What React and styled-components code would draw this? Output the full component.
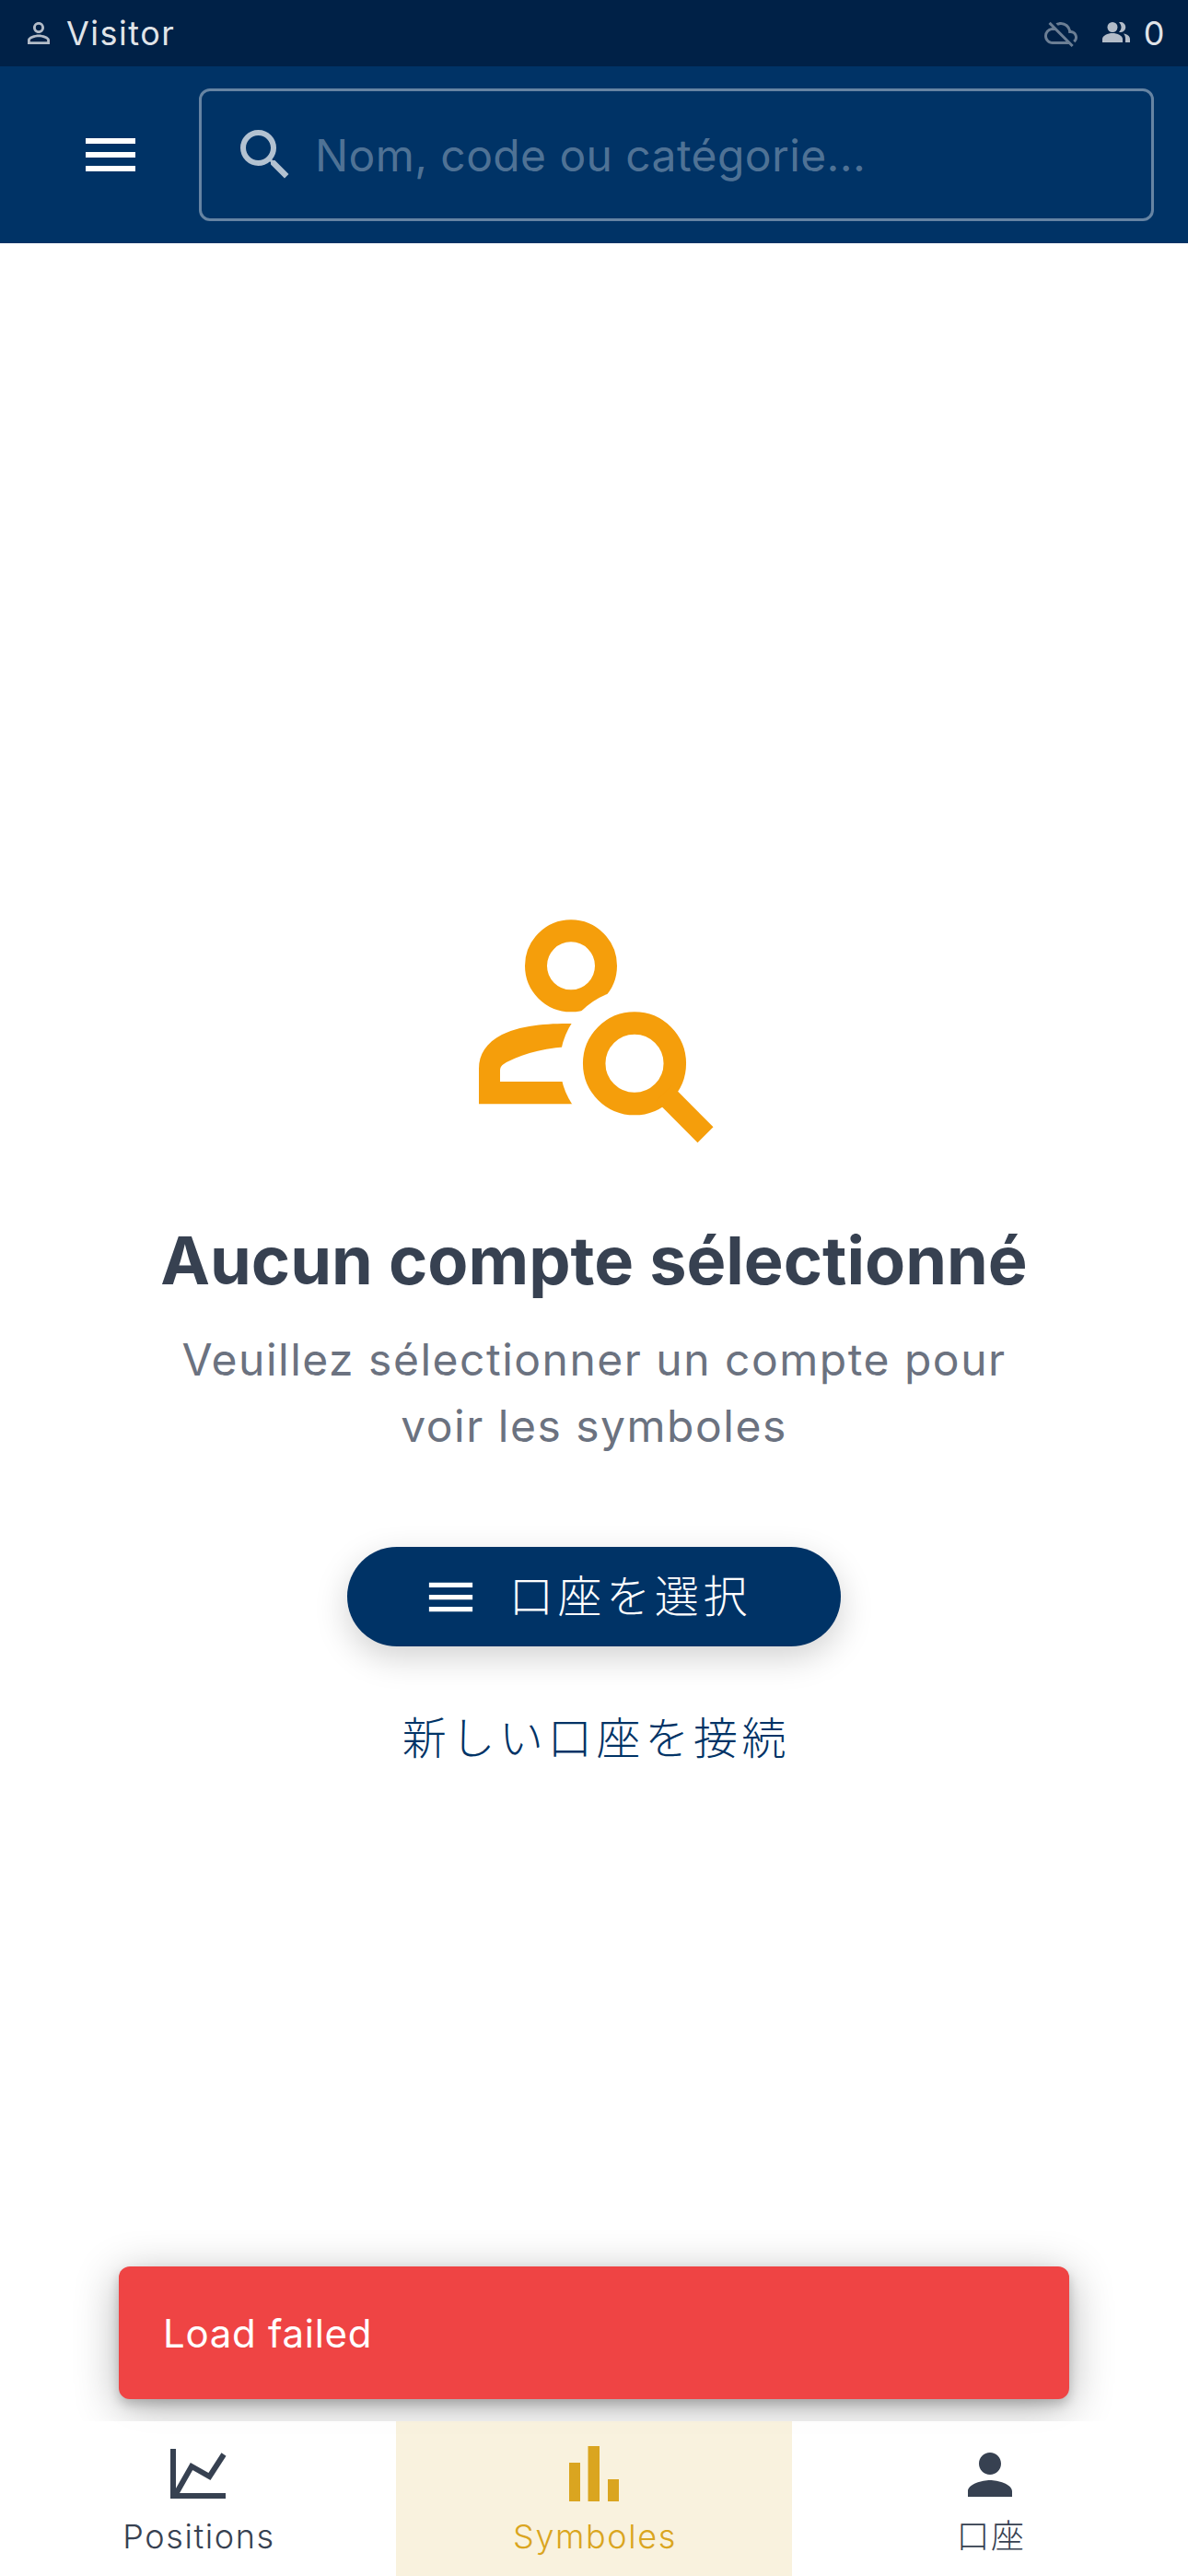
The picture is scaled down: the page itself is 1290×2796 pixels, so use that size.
import React from "react";
import styled, { createGlobalStyle } from "styled-components";
import {
  MdMenu,
  MdSearch,
  MdPerson,
  MdPersonOutline,
  MdOutlineCloudOff,
} from "react-icons/md";

const Global = createGlobalStyle`
  html, body { margin: 0; padding: 0; background: #fff; }
  * { box-sizing: border-box; }
  body { font-family: Inter, "Noto Sans CJK JP", sans-serif; }
`;

const Screen = styled.div`
  width: 1290px;
  height: 2796px;
  display: flex;
  flex-direction: column;
  overflow: hidden;
  background: #fff;
`;

const StatusBar = styled.div`
  height: 72px;
  flex: none;
  display: flex;
  align-items: center;
  justify-content: space-between;
  padding: 0 24px;
  background: #002147;
  color: rgba(255, 255, 255, 0.9);
  font-size: 36px;
`;

const StatusGroup = styled.div`
  display: flex;
  align-items: center;
  gap: ${(p) => p.$gap}px;
  color: rgba(255, 255, 255, 0.7);
`;

const StatusText = styled.span`
  color: rgba(255, 255, 255, 0.9);
  letter-spacing: 1.5px;
  margin-left: ${(p) => p.$ml || 0}px;
`;

const CloudOff = styled(MdOutlineCloudOff)`
  opacity: 0.6;
`;

const Header = styled.header`
  height: 192px;
  flex: none;
  display: flex;
  align-items: center;
  padding: 0 37px 0 84px;
  gap: 60px;
  background: #003366;
`;

const MenuButton = styled.button`
  width: 72px;
  height: 72px;
  flex: none;
  padding: 0;
  border: 0;
  background: none;
  color: #fff;
  display: flex;
`;

const SearchBox = styled.div`
  flex: 1;
  height: 144px;
  display: flex;
  align-items: center;
  gap: 18px;
  padding: 0 33px;
  border: 3px solid rgba(255, 255, 255, 0.4);
  border-radius: 12px;
  color: rgba(255, 255, 255, 0.7);
`;

const Placeholder = styled.span`
  font-size: 48px;
  color: rgba(255, 255, 255, 0.33);
  letter-spacing: 0.4px;
`;

const Main = styled.main`
  flex: 1;
  position: relative;
  display: flex;
  flex-direction: column;
  align-items: center;
  padding-top: 684px;
`;

const HeroSvg = styled.svg`
  display: block;
  width: 300px;
  height: 300px;
  color: #f59e0b;
`;

const Title = styled.h1`
  margin: 72px 0 0;
  font-size: 72px;
  line-height: 96px;
  font-weight: 700;
  color: #374151;
`;

const Subtitle = styled.p`
  margin: 24px 0 0;
  width: 1000px;
  text-align: center;
  font-size: 48px;
  line-height: 72px;
  letter-spacing: 1.5px;
  color: #6b7280;
`;

const PrimaryButton = styled.button`
  margin-top: 95px;
  width: 536px;
  height: 108px;
  display: flex;
  align-items: center;
  justify-content: center;
  gap: 32px;
  padding: 0 16px 0 0;
  border: 0;
  border-radius: 54px;
  background: #003366;
  color: #fff;
  font: 300 48px/1 Inter, "Noto Sans CJK JP", sans-serif;
  letter-spacing: 4.7px;
  box-shadow: 0 12px 36px rgba(0, 0, 0, 0.18);
`;

const LinkText = styled.a`
  margin-top: 64px;
  padding-left: 5px;
  font-size: 48px;
  font-weight: 300;
  line-height: 72px;
  letter-spacing: 4.7px;
  color: #003366;
`;

const Toast = styled.div`
  position: absolute;
  left: 129px;
  right: 129px;
  bottom: 24px;
  height: 144px;
  display: flex;
  align-items: center;
  padding: 0 48px;
  border-radius: 12px;
  background: #ef4444;
  color: #fff;
  font-size: 42px;
  letter-spacing: 0.7px;
  box-shadow: 0 10px 48px rgba(0, 0, 0, 0.3), 0 6px 12px rgba(0, 0, 0, 0.18);
`;

const Nav = styled.nav`
  height: 168px;
  flex: none;
  position: relative;
  z-index: 1;
  display: grid;
  grid-template-columns: repeat(3, 1fr);
  background: rgba(255, 255, 255, 0.9);
`;

const Tab = styled.div`
  display: flex;
  flex-direction: column;
  align-items: center;
  padding-top: 22px;
  color: ${(p) => (p.$active ? "#daa520" : "#374151")};
  background: ${(p) => (p.$active ? "rgba(218, 165, 32, 0.15)" : "transparent")};
`;

const TabIcon = styled.div`
  height: 72px;
  display: flex;
  align-items: center;
  justify-content: center;
`;

const TabLabel = styled.span`
  margin-top: 9px;
  padding-left: 2px;
  font-size: 36px;
  line-height: 44px;
  letter-spacing: 1.6px;
  font-weight: 300;
`;

const HeroIcon = () => (
  <HeroSvg viewBox="0 0 300 300" fill="none">
    <defs>
      <mask id="lensCut" maskUnits="userSpaceOnUse" x="0" y="0" width="300" height="300">
        <rect width="300" height="300" fill="#fff" />
        <circle cx="194" cy="206.3" r="81" fill="#000" />
      </mask>
    </defs>
    <g mask="url(#lensCut)">
      <circle cx="125" cy="100.3" r="38" stroke="currentColor" strokeWidth="24" />
      <path
        d="M25 250.3V212C25 196 33 184 50 175C75 163 105 163 130 163V188C100 188 75 195 57 204C51 207 48 209 48 214V226H130V250.3Z"
        fill="currentColor"
      />
    </g>
    <circle cx="194" cy="206.3" r="43.8" stroke="currentColor" strokeWidth="24.5" />
    <path d="M226 238.5L271 283.7" stroke="currentColor" strokeWidth="24" />
  </HeroSvg>
);

const ChartIcon = () => (
  <svg width="72" height="72" viewBox="0 0 72 72" fill="none" stroke="currentColor" strokeWidth="6">
    <path d="M9 8V59H66" />
    <path d="M12 57L29 27L48.5 38L64 14" />
  </svg>
);

const BarsIcon = () => (
  <svg width="72" height="72" viewBox="0 0 72 72" fill="currentColor">
    <rect x="9" y="23" width="12" height="42" />
    <rect x="29.5" y="5" width="12.5" height="60" />
    <rect x="51" y="41" width="12" height="24" />
  </svg>
);

const PeopleIcon = () => (
  <svg width="30" height="24" viewBox="0 0 30 24" fill="currentColor">
    <circle cx="11" cy="5.5" r="5.5" />
    <path d="M0 22V18.5C0 14.5 6 12 11 12C16 12 22 14.5 22 18.5V22Z" />
    <path d="M18 .3A5.5 5.5 0 1 1 18 10.7C19.7 9 20.5 7.5 20.5 5.5S19.7 2 18 .3Z" />
    <path d="M23 12.5C27 13 30 15 30 18.5V22H25V18C25 16 24.5 14 23 12.5Z" />
  </svg>
);

export default function App() {
  return (
    <Screen>
      <Global />
      <StatusBar>
        <StatusGroup $gap={12}>
          <MdPersonOutline size={36} />
          <StatusText>Visitor</StatusText>
        </StatusGroup>
        <StatusGroup $gap={27}>
          <CloudOff size={36} />
          <StatusGroup $gap={0}>
            <PeopleIcon />
            <StatusText $ml={15}>0</StatusText>
          </StatusGroup>
        </StatusGroup>
      </StatusBar>
      <Header>
        <MenuButton>
          <MdMenu size={72} />
        </MenuButton>
        <SearchBox>
          <MdSearch size={72} />
          <Placeholder>Nom, code ou catégorie...</Placeholder>
        </SearchBox>
      </Header>
      <Main>
        <HeroIcon />
        <Title>Aucun compte sélectionné</Title>
        <Subtitle>Veuillez sélectionner un compte pour voir les symboles</Subtitle>
        <PrimaryButton>
          <MdMenu size={63} />
          口座を選択
        </PrimaryButton>
        <LinkText>新しい口座を接続</LinkText>
        <Toast>Load failed</Toast>
      </Main>
      <Nav>
        <Tab>
          <TabIcon><ChartIcon /></TabIcon>
          <TabLabel>Positions</TabLabel>
        </Tab>
        <Tab $active>
          <TabIcon><BarsIcon /></TabIcon>
          <TabLabel>Symboles</TabLabel>
        </Tab>
        <Tab>
          <TabIcon><MdPerson size={72} /></TabIcon>
          <TabLabel>口座</TabLabel>
        </Tab>
      </Nav>
    </Screen>
  );
}
